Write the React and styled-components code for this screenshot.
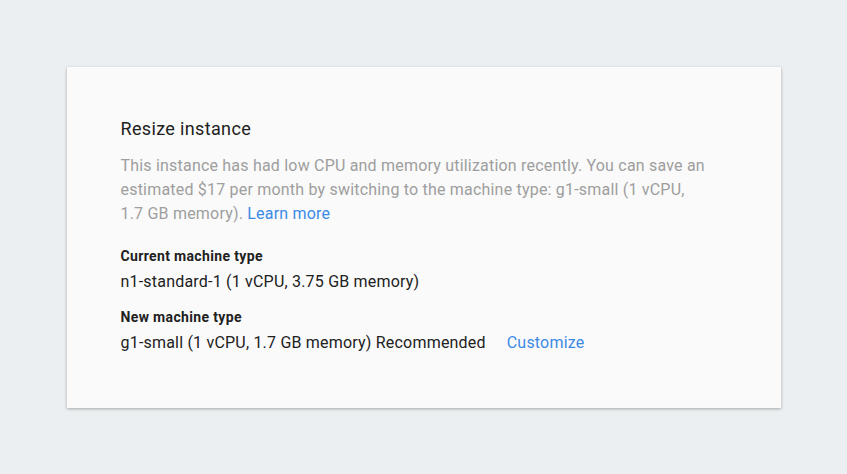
import React from 'react';
import styled, { createGlobalStyle } from 'styled-components';

const GlobalStyle = createGlobalStyle`
  html, body {
    margin: 0;
    padding: 0;
    background: #eceff1;
    font-family: Roboto, "Liberation Sans", Arial, sans-serif;
  }
`;

const Page = styled.div`
  width: 100vw;
  height: 100vh;
  display: flex;
  align-items: center;
  justify-content: center;
`;

const Card = styled.div`
  width: 714px;
  box-sizing: border-box;
  padding: 50px 54px 53px 54px;
  background: #fafafa;
  box-shadow: 0 1px 3px rgba(0, 0, 0, 0.3);
`;

const Title = styled.h2`
  margin: 0;
  font-size: 18px;
  line-height: 24px;
  font-weight: 400;
  letter-spacing: 0.35px;
  color: #212121;
`;

const Description = styled.p`
  margin: 13px 0 0 0;
  max-width: 588px;
  font-size: 16px;
  line-height: 24px;
  letter-spacing: 0.2px;
  color: #9e9e9e;
`;

const Link = styled.a`
  color: #3b8ae6;
  text-decoration: none;
  cursor: pointer;
  margin-left: ${props => (props.$gap ? props.$gap : 0)}px;
`;

const Field = styled.div`
  margin-top: ${props => props.$top}px;
`;

const Label = styled.div`
  font-size: 14px;
  line-height: 20px;
  font-weight: 700;
  letter-spacing: 0.35px;
  color: #212121;
`;

const Value = styled.div`
  margin-top: 4px;
  font-size: 16px;
  line-height: 24px;
  letter-spacing: 0.2px;
  color: #212121;
`;

export default function App() {
  return (
    <Page>
      <GlobalStyle />
      <Card>
        <Title>Resize instance</Title>
        <Description>
          This instance has had low CPU and memory utilization recently. You can save an
          estimated $17 per month by switching to the machine type: g1-small (1 vCPU,
          1.7 GB memory). <Link>Learn more</Link>
        </Description>
        <Field $top={20}>
          <Label>Current machine type</Label>
          <Value>n1-standard-1 (1 vCPU, 3.75 GB memory)</Value>
        </Field>
        <Field $top={13}>
          <Label>New machine type</Label>
          <Value>
            g1-small (1 vCPU, 1.7 GB memory) Recommended
            <Link $gap={21}>Customize</Link>
          </Value>
        </Field>
      </Card>
    </Page>
  );
}
